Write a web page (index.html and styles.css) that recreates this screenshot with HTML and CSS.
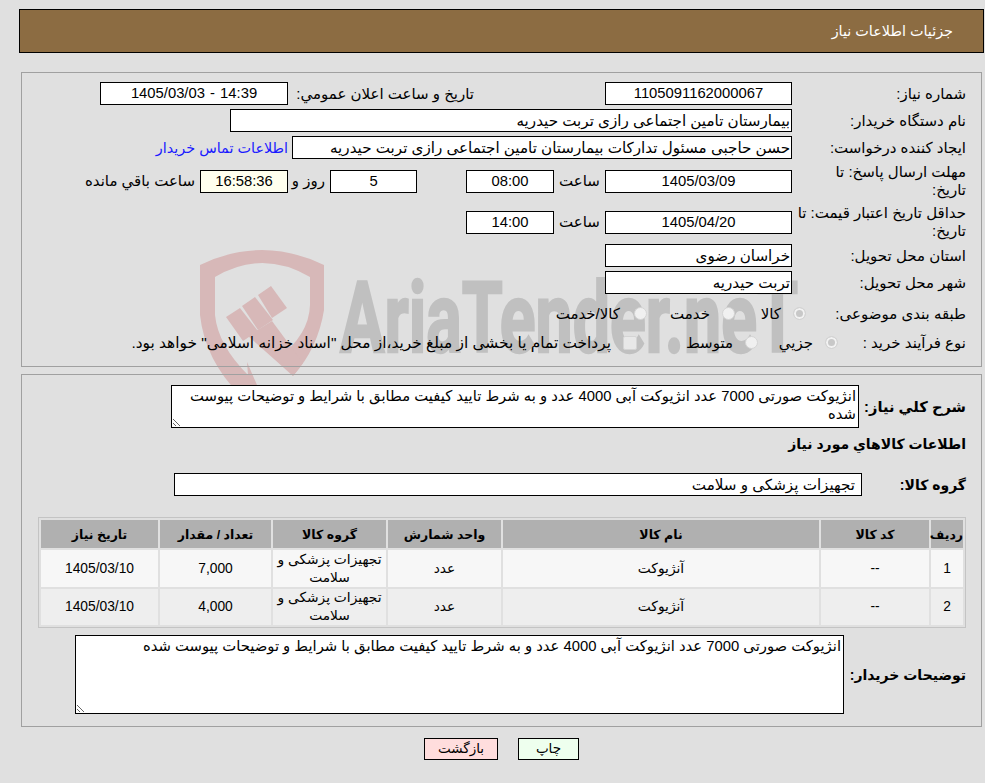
FILE: index.html
```html
<!DOCTYPE html>
<html lang="fa" dir="rtl">
<head>
<meta charset="utf-8">
<title>جزئیات اطلاعات نیاز</title>
<link rel="stylesheet" href="styles.css">
</head>
<body>
<div class="page">
  <svg class="watermark" viewBox="0 0 985 783" aria-hidden="true">
    <g class="wm-red">
      <path d="M200 265 Q262 235 324 265 V310 Q318 348 293 376 L278 358 Q309 335 310 305 V277 Q262 249 215 277 V315 Q218 345 248 375 L247 362 L257 385 L240 395 Q205 360 200 315 Z"/>
      <path d="M226 317 L240 308 L258 331 L243 341 Z"/>
      <path d="M242 306 L255 297 L273 320 L258 330 Z"/>
      <path d="M258 295 L271 286 L287 308 L272 318 Z"/>
      <path d="M248 336 L272 321 L303 363 L293 376 Z"/>
    </g>
    <text class="wm-text" x="340" y="352" direction="ltr" textLength="458" lengthAdjust="spacingAndGlyphs">AriaTender.neT</text>
  </svg>

  <header class="title-bar">جزئیات اطلاعات نیاز</header>

  <section class="panel panel-top">
    <div class="row">
      <div class="label">شماره نیاز:</div>
      <div class="field w-date num">1105091162000067</div>
      <div class="label-auto gap-announce">تاریخ و ساعت اعلان عمومي:</div>
      <div class="field w-date2 num"><span class="stamp" dir="ltr">1405/03/03 - 14:39</span></div>
    </div>
    <div class="row">
      <div class="label">نام دستگاه خریدار:</div>
      <div class="field w-buyer start">بیمارستان تامین اجتماعی رازی تربت حیدریه</div>
    </div>
    <div class="row">
      <div class="label">ایجاد کننده درخواست:</div>
      <div class="field w-creator start">حسن حاجبی مسئول تدارکات بیمارستان تامین اجتماعی رازی تربت حیدریه</div>
      <a class="contact" href="#">اطلاعات تماس خریدار</a>
    </div>
    <div class="row row-tall first-tall">
      <div class="label">مهلت ارسال پاسخ: تا<br>تاریخ:</div>
      <div class="field w-date num">1405/03/09</div>
      <div class="label-auto hour">ساعت</div>
      <div class="field w-time num">08:00</div>
      <div class="field w-days num">5</div>
      <div class="label-auto days-text">روز و</div>
      <div class="field w-clock num">16:58:36</div>
      <div class="label-auto remain">ساعت باقي مانده</div>
    </div>
    <div class="row row-tall">
      <div class="label">حداقل تاریخ اعتبار قیمت: تا<br>تاریخ:</div>
      <div class="field w-date num">1405/04/20</div>
      <div class="label-auto hour">ساعت</div>
      <div class="field w-time num">14:00</div>
    </div>
    <div class="row">
      <div class="label">استان محل تحویل:</div>
      <div class="field w-date start">خراسان رضوی</div>
    </div>
    <div class="row">
      <div class="label">شهر محل تحویل:</div>
      <div class="field w-date start">تربت حیدریه</div>
    </div>
    <div class="row row-choice choice-one">
      <div class="label label-subject">طبقه بندی موضوعی:</div>
      <span class="radio radio-on"></span><span class="opt opt-a">کالا</span>
      <span class="radio"></span><span class="opt opt-b">خدمت</span>
      <span class="radio radio-last"></span><span class="opt">کالا/خدمت</span>
    </div>
    <div class="row row-choice">
      <div class="label label-process">نوع فرآیند خرید :</div>
      <span class="radio radio-on"></span><span class="opt opt-c">جزیي</span>
      <span class="radio"></span><span class="opt opt-d">متوسط</span>
      <span class="check"></span><span class="opt opt-long">پرداخت تمام یا بخشی از مبلغ خرید،از محل "اسناد خزانه اسلامی" خواهد بود.</span>
    </div>
  </section>

  <section class="panel panel-bottom">
    <div class="row row-desc">
      <div class="label-strong l-desc">شرح کلي نیاز:</div>
      <textarea class="area area-desc" readonly>انژیوکت صورتی 7000 عدد انژیوکت آبی 4000 عدد و به شرط تایید کیفیت مطابق با شرایط و توضیحات پیوست شده</textarea>
    </div>
    <h2 class="subhead">اطلاعات کالاهاي مورد نیاز</h2>
    <div class="row row-group">
      <div class="label-strong l-group">گروه کالا:</div>
      <div class="field w-group start">تجهیزات پزشکی و سلامت</div>
    </div>
    <table class="items">
      <colgroup>
        <col class="c-radif"><col class="c-code"><col class="c-name"><col class="c-unit"><col class="c-grp"><col class="c-qty"><col class="c-need">
      </colgroup>
      <thead>
        <tr><th>ردیف</th><th>کد کالا</th><th>نام کالا</th><th>واحد شمارش</th><th>گروه کالا</th><th>تعداد / مقدار</th><th>تاریخ نیاز</th></tr>
      </thead>
      <tbody>
        <tr class="r1"><td>1</td><td>--</td><td>آنژیوکت</td><td>عدد</td><td>تجهیزات پزشکی و سلامت</td><td>7,000</td><td>1405/03/10</td></tr>
        <tr class="r2"><td>2</td><td>--</td><td>آنژیوکت</td><td>عدد</td><td>تجهیزات پزشکی و سلامت</td><td>4,000</td><td>1405/03/10</td></tr>
      </tbody>
    </table>
    <div class="row row-notes">
      <div class="label-strong l-notes">توضیحات خریدار:</div>
      <textarea class="area area-notes" readonly>انژیوکت صورتی 7000 عدد انژیوکت آبی 4000 عدد و به شرط تایید کیفیت مطابق با شرایط و توضیحات پیوست شده</textarea>
    </div>
  </section>

  <div class="actions">
    <button class="btn btn-print" type="button">چاپ</button>
    <button class="btn btn-back" type="button">بازگشت</button>
  </div>
</div>
</body>
</html>
```
FILE: styles.css
```css
html, body {
  margin: 0;
  padding: 0;
  background: #e0e0e0;
  overflow: hidden;
}
body {
  font-family: "Liberation Sans", "DejaVu Sans", sans-serif;
  font-size: 15px;
  color: #000;
}
.page {
  position: relative;
  width: 985px;
  height: 783px;
  box-sizing: border-box;
  padding: 9px 1px 0 0;
}
.watermark {
  position: absolute;
  top: 0;
  left: 0;
  width: 985px;
  height: 783px;
  pointer-events: none;
}
.wm-red { fill: #d7b8b8; }
.wm-text {
  font-family: Roboto, "Liberation Sans", sans-serif;
  font-weight: 700;
  font-size: 98px;
  fill: #c0c0c0;
  stroke: #c0c0c0;
  stroke-width: 2.5px;
}
.title-bar {
  position: relative;
  height: 42px;
  margin-left: 19px;
  padding-right: 30px;
  border: 1px solid #000;
  background: #8c6c42;
  color: #fff;
  font-size: 14.4px;
  line-height: 42px;
}
.panel {
  position: relative;
  box-sizing: border-box;
  margin-left: 21px;
  margin-right: 2px;
  padding-right: 15px;
  border: 1px solid #a0a0a0;
}
.panel-top {
  height: 295px;
  margin-top: 19px;
  padding-top: 9px;
}
.panel-bottom {
  height: 353px;
  margin-top: 7px;
  padding-top: 10px;
}
.row {
  display: flex;
  align-items: center;
  margin-bottom: 4px;
  min-height: 23px;
}
.row-tall {
  height: 38px;
  margin-bottom: 3px;
}
.first-tall { margin-top: -1px; }
.row-choice {
  height: 29px;
  margin-bottom: 0;
}
.choice-one { margin-top: 5px; }
.label {
  flex: none;
  box-sizing: border-box;
  width: 174px;
  line-height: 18px;
  white-space: nowrap;
}
.label-subject { width: 160px; }
.label-process { width: 128px; }
.label-auto { flex: none; white-space: nowrap; }
.gap-announce { margin-right: 131px; margin-left: 5px; width: 181px; }
.hour { margin: 0 5px; width: 41px; text-align: center; }
.days-text { margin: 0 5px; width: 32px; text-align: center; }
.remain { margin-right: 5px; }
.field {
  flex: none;
  box-sizing: border-box;
  height: 23px;
  border: 1px solid #000;
  background: #fff;
  line-height: 21px;
  text-align: center;
  white-space: nowrap;
  overflow: hidden;
}
.num { font-size: 14.8px; }
.stamp { word-spacing: 1px; }
.start {
  text-align: right;
  padding: 0 1px;
  font-size: 15.15px;
}
.w-date { width: 187px; }
.w-date2 { width: 188px; }
.w-buyer { width: 562px; }
.w-creator { width: 500px; }
.w-time { width: 88px; }
.w-days { width: 87px; margin-right: 49px; }
.w-clock { width: 88px; background: #ffffee; }
.w-group { width: 688px; padding-right: 6px; }
.contact {
  margin-right: 4px;
  color: #1a1aff;
  font-size: 14.4px;
  text-decoration: none;
}
.radio, .check {
  flex: none;
  box-sizing: border-box;
  display: inline-block;
  width: 13px;
  height: 13px;
  margin-left: 12px;
  border: 1px solid #d4d4d4;
  background: #f0f0f0;
  border-radius: 50%;
}
.radio-on { background: #c8c8c8; box-shadow: inset 0 0 0 2px #f2f2f2; }
.radio-last { margin-left: 14px; }
.check { width: 14px; height: 14px; border-radius: 2px; background: #e8e8e8; }
.opt { flex: none; white-space: nowrap; }
.opt-a { width: 46px; }
.opt-b { width: 63px; }
.opt-c { width: 55px; }
.opt-d { width: 96px; }
.opt-long { font-size: 15.4px; }
.label-strong {
  flex: none;
  box-sizing: border-box;
  font-size: 14px;
  font-weight: 700;
}
.l-desc { width: 107px; font-size: 14.67px; }
.l-group { width: 104px; }
.l-notes { width: 122px; }
.area {
  flex: none;
  box-sizing: border-box;
  display: block;
  margin: 0;
  padding: 1px 2px;
  border: 1px solid #000;
  border-radius: 0;
  background: #fff;
  font: inherit;
  font-size: 14.8px;
  color: #000;
  line-height: 18px;
  outline: none;
  overflow: hidden;
}
.area-desc { width: 688px; height: 43px; padding-left: 10px; }
.area-notes { width: 769px; height: 79px; }
.row-desc { margin-bottom: 0; }
.subhead {
  margin: 1px 0 0;
  height: 30px;
  font-size: 14px;
  font-weight: 700;
  line-height: 30px;
}
.row-group { margin: 0; padding-top: 14px; }
.items {
  width: 928px;
  margin-top: 21px;
  border: 1px solid #c4c4c4;
  border-collapse: separate;
  border-spacing: 2px;
  table-layout: fixed;
}
.c-radif { width: 32px; }
.c-code { width: 108px; }
.c-name { width: 316px; }
.c-unit { width: 113px; }
.c-grp { width: 113px; }
.c-qty { width: 111px; }
.c-need { width: 117px; }
.items th {
  height: 28px;
  padding: 0;
  background: #b0b0b0;
  font-size: 12.5px;
  font-weight: 700;
}
.items td {
  padding: 0;
  font-size: 13.8px;
  text-align: center;
  line-height: 18px;
}
.r1 td { height: 37px; background: #f7f7f7; }
.r2 td { height: 36px; background: #eeeeee; }
.row-notes { margin: 7px 0 0; }
.actions {
  position: relative;
  display: flex;
  justify-content: center;
  gap: 20px;
  margin-top: 11px;
  margin-left: 19px;
}
.btn {
  box-sizing: border-box;
  height: 22px;
  padding: 0;
  border: 1px solid #000;
  font: inherit;
  font-size: 13.5px;
  color: #000;
  line-height: 20px;
}
.btn-print { width: 61px; background: #eeffee; }
.btn-back { width: 74px; background: #ffdddd; }
```
